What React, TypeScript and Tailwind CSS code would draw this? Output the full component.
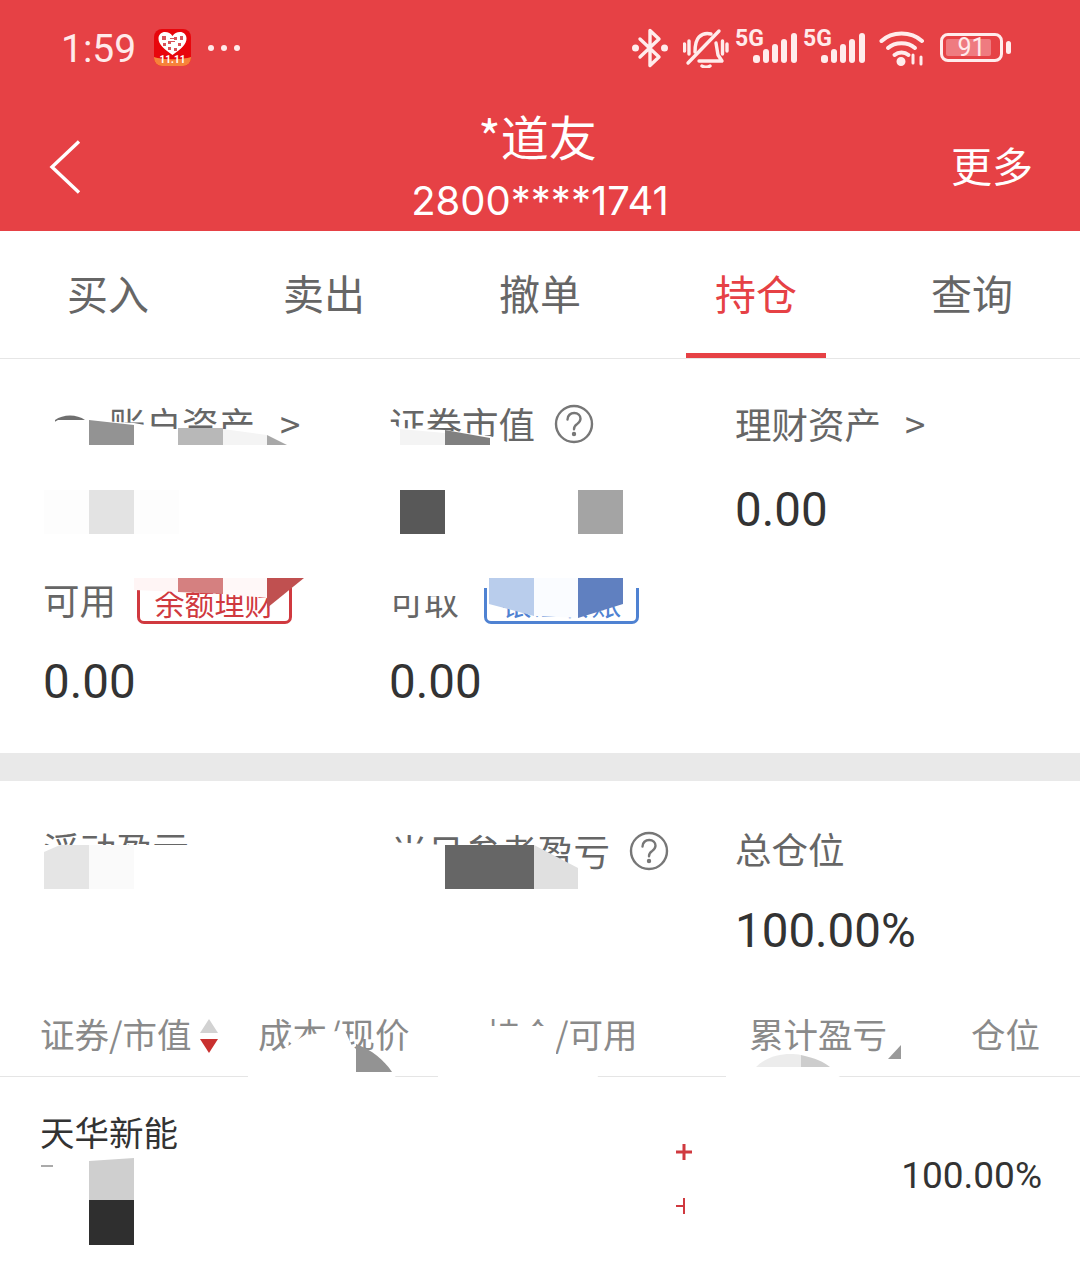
const cjk = "font-['Noto_Sans_CJK_SC','Noto_Sans',sans-serif]";
const num = "font-['Roboto','Noto_Sans_CJK_SC',sans-serif]";

function Help() {
  return (
    <svg width="40" height="40" viewBox="0 0 40 40" fill="none" stroke="#777" strokeWidth="2.4" strokeLinecap="round">
      <circle cx="20" cy="20" r="18" />
      <path d="M13.5 15.5c0-4 3-6.5 6.7-6.5s6.3 2.500 6.300 5.800c0 2.700-1.800 4-3.700 5.500-1.900 1.400-2.800 2.600-2.800 5" />
      <circle cx="20" cy="30" r="1" fill="#777" />
    </svg>
  );
}

function Signal() {
  return (
    <svg width="46" height="31" viewBox="0 0 46 31" fill="#ffecec">
      <rect x="0" y="22" width="7" height="8" rx="3" />
      <rect x="10" y="16" width="6" height="14" rx="3" />
      <rect x="19" y="11" width="6" height="19" rx="3" />
      <rect x="28" y="6" width="6" height="24" rx="3" />
      <rect x="38" y="0" width="6" height="30" rx="3" />
    </svg>
  );
}

function PddIcon() {
  return (
    <div className="relative w-[37px] h-[37px] rounded-[8px] overflow-hidden bg-[#e8060c] flex flex-col items-center">
      <svg width="37" height="37" viewBox="0 0 37 37" className="absolute inset-0">
        <path d="M0 28c8 3 29 3 37 0v9H0z" fill="#f7823a" />
        <path d="M18.500 26C10 20 4.500 15.500 4.500 9.500 4.500 5.500 7.500 3 11 3c3.200 0 5.800 1.500 7.500 4C20.200 4.500 22.800 3 26 3c3.500 0 6.500 2.500 6.500 6.500 0 6-5.500 10.500-14 16.500z" fill="#ffffff" />
        <path d="M8 7h4v4H8zM14 12h3v3h-3zM20 8h3v3h-3zM26 7h3v4h-3zM9 14h3v3H9zM24 14h3v3h-3zM14 18h3v3h-3zM20 19h3v3h-3zM16 9h5v1h-5zM16 12h5v1h-5z" fill="#d8545a" />
      </svg>
      <span className="absolute bottom-[1px] text-[10px] leading-[10px] font-bold text-white font-['Roboto',sans-serif]">11.11</span>
    </div>
  );
}

function StatusBar() {
  return (
    <div className="h-[95px] flex items-center pl-[61px] pr-[69px] text-[#ffeaea]">
      <span className={`${num} text-[39px] leading-[40px] w-[93px] mt-[2px]`}>1:59</span>
      <PddIcon />
      <div className="flex gap-[7px] ml-[17px]">
        <span className="w-[6px] h-[6px] rounded-full bg-[#ffeaea]" />
        <span className="w-[6px] h-[6px] rounded-full bg-[#ffeaea]" />
        <span className="w-[6px] h-[6px] rounded-full bg-[#ffeaea]" />
      </div>
      <div className="ml-auto flex items-center">
        <svg width="36" height="40" viewBox="0 0 36 40" fill="none" stroke="#ffecec" strokeWidth="3.400" strokeLinejoin="round" strokeLinecap="round">
          <path d="M8 11l19 18-9 8.500V2.500l9 8.500-19 18" />
          <circle cx="3.500" cy="20" r="1.800" fill="#ffecec" />
          <circle cx="32.500" cy="20" r="1.800" fill="#ffecec" />
        </svg>
        <svg width="46" height="40" viewBox="0 0 46 40" fill="none" stroke="#ffecec" strokeWidth="3.400" strokeLinecap="round" strokeLinejoin="round" className="ml-[15px]">
          <path d="M12 24c0-8 1-12 4-15 3-3 8-4 12-3" />
          <path d="M33 15l2 12 4 6H16" />
          <path d="M36 3L5 35" />
          <path d="M19 38c2 1.500 6 1.500 8 0" />
          <path d="M1.500 16v7M6 13v13M39.500 13v13M44 16v7" />
        </svg>
        <div className="relative w-[48px] h-[36px] ml-[6px]">
          <span className="absolute left-0 top-[-1px] text-[23px] leading-[20px] font-bold font-['Roboto',sans-serif]">5G</span>
          <span className="absolute left-[18px] bottom-[2px]"><Signal /></span>
        </div>
        <div className="relative w-[48px] h-[36px] ml-[20px]">
          <span className="absolute left-0 top-[-1px] text-[23px] leading-[20px] font-bold font-['Roboto',sans-serif]">5G</span>
          <span className="absolute left-[18px] bottom-[2px]"><Signal /></span>
        </div>
        <svg width="46" height="36" viewBox="0 0 46 36" fill="none" stroke="#ffecec" strokeWidth="4" strokeLinecap="round" className="ml-[28px]">
          <path d="M2.500 11C13 1 32 1 43 11" />
          <path d="M9 18c7-6.500 20-6.500 27 0" />
          <path d="M15.500 25c4-3.500 10-3.500 14 0" />
          <circle cx="22" cy="31.500" r="2.500" fill="#ffecec" />
          <path d="M34 25v8M42 27v7" strokeWidth="3" />
        </svg>
        <div className="ml-[15px] w-[63px] h-[29px] rounded-[8px] border-[3px] border-[#ffecec] p-[3px] relative flex items-center">
          <div className="h-full w-[45px] bg-[#ef7b80] rounded-[2px]" />
          <span className="absolute inset-0 text-center text-[25px] leading-[23px] font-['Roboto',sans-serif]">91</span>
        </div>
        <span className="ml-[3px] w-[5px] h-[13px] rounded-full bg-[#ffecec]" />
      </div>
    </div>
  );
}

function TitleBar() {
  return (
    <div className="h-[136px] flex items-start text-white">
      <div className="w-[270px] pl-[49px] pt-[45px]">
        <svg width="32" height="54" viewBox="0 0 32 54" fill="none" stroke="#ffffff" strokeWidth="3.400">
          <path d="M30 1.500L3 27l27 25.500" />
        </svg>
      </div>
      <div className="flex-1 flex flex-col items-center pt-[9px]">
        <span className={`${cjk} text-[48px] leading-[62px] mr-[5px]`}>*道友</span>
        <span className="font-['Inter',sans-serif] text-[40px] leading-[50px] mt-[10px]">2800****1741</span>
      </div>
      <div className={`${cjk} w-[270px] text-right pr-[47px] pt-[43px] text-[41px] leading-[52px]`}>更多</div>
    </div>
  );
}

function Tabs() {
  const items = ["买入", "卖出", "撤单", "持仓", "查询"];
  return (
    <div className="grid grid-cols-5 h-[128px] border-b border-[#e6e6e6] bg-white">
      {items.map((t) => (
        <div key={t} className="relative flex items-center justify-center pb-[6px]">
          <span className={`${cjk} text-[41px] leading-[52px] ${t === "持仓" ? "text-[#e64145]" : "text-[#666666]"}`}>{t}</span>
          {t === "持仓" && <span className="absolute bottom-0 w-[140px] h-[5px] bg-[#e64145]" />}
        </div>
      ))}
    </div>
  );
}

function Label({ children }: { children: React.ReactNode }) {
  return <span className={`${cjk} text-[36.500px] leading-[40px] text-[#666666]`}>{children}</span>;
}

function Value({ children }: { children: React.ReactNode }) {
  return <div className={`${num} h-[60px] text-[47.500px] leading-[60px] text-[#333333]`}>{children}</div>;
}

function Assets() {
  return (
    <div className="h-[394px] bg-white pt-[45px] pl-[43px] grid grid-cols-[346px_346px_1fr] grid-rows-[174px_130px]">
      <div className="flex flex-col">
        <div className="h-[40px] flex items-center gap-[25px] pl-[66px]"><Label>账户资产</Label><Label>&gt;</Label></div>
        <div className="mt-[36px]"><Value>&nbsp;</Value></div>
      </div>
      <div className="flex flex-col">
        <div className="h-[40px] flex items-center gap-[19px]"><Label>证券市值</Label><Help /></div>
        <div className="mt-[36px]"><Value>&nbsp;</Value></div>
      </div>
      <div className="flex flex-col">
        <div className="h-[40px] flex items-center gap-[24px]"><Label>理财资产</Label><Label>&gt;</Label></div>
        <div className="mt-[36px]"><Value>0.00</Value></div>
      </div>
      <div className="flex flex-col pt-[2px]">
        <div className="h-[40px] flex items-center"><Label>可用</Label>
          <span className={`${cjk} ml-[21px] w-[155px] h-[44px] mt-[4px] rounded-[7px] border-[3px] border-[#d0393f] text-[#d0393f] text-[30px] leading-[38px] text-center`}>余额理财</span>
        </div>
        <div className="mt-[32px]"><Value>0.00</Value></div>
      </div>
      <div className="flex flex-col pt-[2px]">
        <div className="h-[40px] flex items-center"><Label><span className="text-[35px]">可取</span></Label>
          <span className={`${cjk} ml-[25px] w-[155px] h-[44px] mt-[4px] rounded-[7px] border-[3px] border-[#4f82d2] text-[#4f82d2] text-[30px] leading-[38px] text-center`}>银证转账</span>
        </div>
        <div className="mt-[32px]"><Value>0.00</Value></div>
      </div>
      <div />
    </div>
  );
}

function Profit() {
  return (
    <div className="h-[180px] bg-white pt-[48px] pl-[43px] grid grid-cols-[346px_346px_1fr]">
      <Label>浮动盈亏</Label>
      <div className="h-[40px] flex items-center gap-[19px] pl-[2px] mt-[2px]"><Label>当日参考盈亏</Label><Help /></div>
      <div className="flex flex-col">
        <Label>总仓位</Label>
        <div className="mt-[32px]"><Value>100.00%</Value></div>
      </div>
    </div>
  );
}

function TableHead() {
  const cls = `${cjk} text-[34.500px] leading-[40px] text-[#8a8a8a]`;
  return (
    <div className="h-[116px] pt-[52px] bg-white border-b border-[#e5e5e5] grid grid-cols-[258px_228px_263px_1fr]">
      <div className="pl-[40px] flex items-start">
        <span className={cls}>证券/市值</span>
        <svg width="20" height="36" viewBox="0 0 20 36" className="ml-[7px] mt-[5px]">
          <path d="M10 1l9 14H1z" fill="#d2d2d2" />
          <path d="M1 21h18l-9 14z" fill="#c9302f" />
        </svg>
      </div>
      <div className={cls}>成本/现价</div>
      <div className={cls}>持仓/可用</div>
      <div className="flex justify-between pr-[40px]">
        <span className={cls}>累计盈亏</span>
        <span className={cls}>仓位</span>
      </div>
    </div>
  );
}

function Row() {
  return (
    <div className="h-[189px] bg-white relative">
      <div className={`${cjk} pl-[40px] pt-[32px] text-[34.500px] leading-[44px] text-[#333333]`}>天华新能</div>
      <div className={`${num} absolute right-[38px] top-[77px] text-[37px] leading-[44px] text-[#333333]`}>100.00%</div>
    </div>
  );
}

function RedactionOverlay() {
  return (
    <svg width="1080" height="1266" viewBox="0 0 1080 1266" className="absolute left-0 top-0 pointer-events-none">
      {/* first row */}
      <path d="M55 420c8-6 22-6 30 0l4 3v3H55z" fill="#6f6f6f" />
      <path d="M44 428L58 420 85 420 134 423 178 431 222 429 265 432 290 447V470H44z" fill="#ffffff" />
      <path d="M89 420L134 425V445H89z" fill="#939393" />
      <path d="M178 428H223V445H178z" fill="#b8b8b8" />
      <path d="M223 429L267 435V445H223z" fill="#f4f4f4" />
      <path d="M267 435L287 445H267z" fill="#a8a8a8" />
      <path d="M388 420L400 428 445 430 490 436 535 452 535 470H388z" fill="#ffffff" />
      <path d="M400 429L445 433V445H400z" fill="#f4f4f4" />
      <path d="M445 430L490 438V445H445z" fill="#808080" />
      {/* value row */}
      <rect x="89" y="490" width="45" height="44" fill="#e3e3e3" />
      <rect x="44" y="490" width="45" height="44" fill="#fdfdfd" />
      <rect x="134" y="490" width="45" height="44" fill="#fdfdfd" />
      <rect x="400" y="490" width="45" height="44" fill="#585858" />
      <rect x="578" y="490" width="45" height="44" fill="#a4a4a4" />
      {/* buttons */}
      <rect x="134" y="576" width="170" height="12" fill="#ffffff" />
      <path d="M134 578H178V592L134 590z" fill="#fff5f5" />
      <path d="M178 578H223V594L178 592z" fill="#d58080" />
      <path d="M223 578H267V598L223 594z" fill="#fff8f8" />
      <path d="M267 578H304L267 608z" fill="#c05050" />
      <rect x="388" y="576" width="82" height="20" fill="#ffffff" />
      <rect x="482" y="576" width="158" height="12" fill="#ffffff" />
      <path d="M489 578H534V616L489 604z" fill="#b9cdec" />
      <path d="M534 578H578V618L534 616z" fill="#fafcff" />
      <path d="M578 578H623V604L578 618z" fill="#6080c0" />
      {/* profit row */}
      <rect x="40" y="845" width="160" height="50" fill="#ffffff" />
      <path d="M44 852L60 845H89V889H44z" fill="#e5e5e5" />
      <rect x="89" y="845" width="45" height="44" fill="#fafafa" />
      <path d="M390 842L445 845H534L578 870V889H390z" fill="#ffffff" />
      <rect x="445" y="845" width="89" height="44" fill="#666666" />
      <path d="M534 845L578 868V889H534z" fill="#e0e0e0" />
      {/* table head */}
      <path d="M248 1077V1062L285 1048 305 1035 345 1030 352 1046 396 1077z" fill="#ffffff" />
      <path d="M356 1044C372 1050 384 1060 392 1072H356z" fill="#939393" />
      <path d="M480 1026H556V1056H595L598 1078H438V1050L480 1050z" fill="#ffffff" />
      <path d="M726 1078V1068L760 1056 800 1055 842 1078z" fill="#ffffff" />
      <path d="M756 1067C770 1053 790 1053 801 1055V1067z" fill="#ececec" />
      <path d="M801 1055C815 1058 824 1062 830 1067H801z" fill="#cdcdcd" />
      <path d="M888 1059L901 1045V1059z" fill="#9a9a9a" />
      {/* row */}
      <path d="M52 1158H540V1245H40V1170H52z" fill="#ffffff" />
      <rect x="41" y="1165" width="12" height="2" fill="#aaaaaa" />
      <path d="M89 1161L134 1158V1200H89z" fill="#cfcfcf" />
      <rect x="89" y="1200" width="45" height="45" fill="#2f2f2f" />
      <path d="M676 1152H692M684 1144V1160" stroke="#d0393f" strokeWidth="3" />
      <path d="M676 1206H684M684 1198V1214" stroke="#d0393f" strokeWidth="2" />
    </svg>
  );
}

export default function App() {
  return (
    <div className="relative w-[1080px] h-[1266px] overflow-hidden bg-white">
      <div className="bg-[#e64145] h-[231px]">
        <StatusBar />
        <TitleBar />
      </div>
      <Tabs />
      <Assets />
      <div className="h-[28px] bg-[#e9e9e9]" />
      <Profit />
      <TableHead />
      <Row />
      <RedactionOverlay />
    </div>
  );
}
